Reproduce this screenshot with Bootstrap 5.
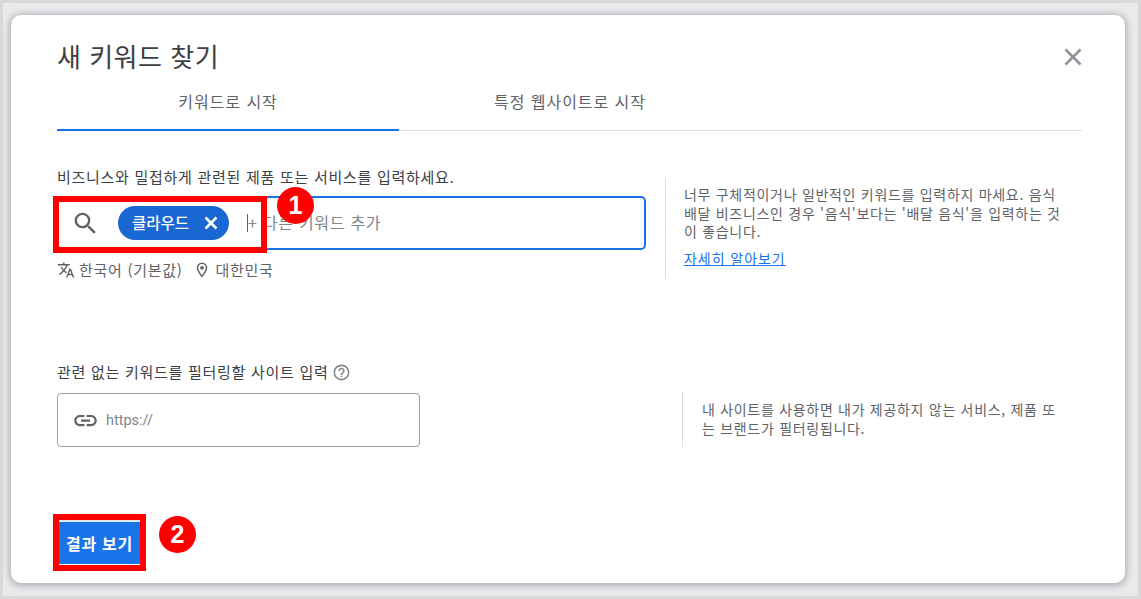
<!DOCTYPE html>
<html lang="ko">
<head>
<meta charset="utf-8">
<title>새 키워드 찾기</title>
<link rel="stylesheet" href="https://cdn.jsdelivr.net/npm/bootstrap@5.3.0/dist/css/bootstrap.min.css">
<style>
html,body{height:100%;}
body{margin:0;background:#e9eaec;font-family:"Noto Sans CJK KR","Noto Sans",sans-serif;overflow:hidden;}
.stage{width:1141px;height:599px;border:3px solid #d9d9d9;padding:12px 13px 13px 8px;position:relative;}
.sheet{height:568px;width:1114px;border:0;border-radius:10px;background:#fff;box-shadow:0 1px 6px 2px rgba(60,64,67,.32);padding:22px 43px 0 46px;color:#3c4043;}
.heading{font-size:26px;line-height:38px;font-weight:400;color:#3c4043;margin:0;letter-spacing:.5px;}
.closer{width:20px;height:20px;margin-top:5px;margin-right:-1px;background:none;border:0;padding:0;}
.tabbar{border-bottom:1px solid #dadce0;margin-top:13px;height:43px;}
.tabitem{width:342px;font-size:16px;line-height:24px;text-align:center;color:#5f6368;padding-top:1px;height:43px;letter-spacing:.95px;}
.tabitem.sel{border-bottom:2px solid #1a73e8;}
.fieldlabel{font-size:15px;line-height:20px;color:#3c4043;letter-spacing:.72px;}
.firstrow{margin-top:36px;}
.leftcol{width:589px;}
.kwbox{height:54px;border:2px solid #1a73e8;border-radius:5px;margin-top:9px;padding-left:12px;}
.chip{background:#1967d2;color:#fff;border-radius:17px;height:34px;width:111px;font-size:15.5px;font-weight:500;padding:0 11px 0 14px;margin-left:18px;}
.caretbar{width:1px;height:18px;background:#5f6368;margin-left:18px;}
.ph{font-size:16px;color:#80868b;letter-spacing:.72px;margin-top:-2px;}
.locale{font-size:15px;line-height:20px;color:#5f6368;margin-top:10px;letter-spacing:.7px;}
.hint{border-left:1px solid #dadce0;font-size:14px;line-height:18.5px;color:#5f6368;letter-spacing:.7px;}
.hint1{margin-left:19px;margin-top:11px;padding:7px 0 0 18px;width:397px;height:101px;}
.hint a{color:#1a73e8;display:block;margin-top:8px;letter-spacing:.95px;}
.secondrow{margin-top:82px;}
.sitecol{width:625px;}
.sitebox{width:363px;height:54px;border:1px solid #9aa0a6;border-radius:4px;margin-top:11px;padding-left:14px;padding-top:1px;font-family:Roboto,"Noto Sans",sans-serif;font-size:14.5px;color:#80868b;gap:7px;}
.hint2{margin-top:30px;padding:8px 0 0 19px;width:375px;height:55px;}
.resultbtn{margin-top:72px;width:81px;height:45px;margin-left:2px;border:0;border-radius:0;background:#1a73e8;color:#fff;font-size:16px;font-weight:700;padding:0;border-top:3px solid #dfe8f5;letter-spacing:.7px;}
.locgap{margin-left:11px;}
.redbox{position:absolute;border:6px solid #f00;pointer-events:none;}
.redbox.one{left:53px;top:196px;width:214px;height:57px;}
.redbox.two{left:53px;top:514px;width:93px;height:57px;}
.dot{position:absolute;width:37px;height:37px;border-radius:50%;background:#f00;color:#fff;font-family:"Liberation Sans",sans-serif;font-weight:700;font-size:25px;}
.dot.one{left:277px;top:187px;}
.dot.two{left:159px;top:516px;}
.stage-abs{position:absolute;left:-3px;top:-3px;width:1141px;height:599px;pointer-events:none;}
</style>
</head>
<body>
<div class="stage">
  <div class="card sheet">
    <div class="d-flex justify-content-between align-items-start">
      <h1 class="heading">새 키워드 찾기</h1>
      <button class="closer" aria-label="닫기">
        <svg width="20" height="20" viewBox="0 0 20 20"><path d="M2.500 2.500 17.500 17.500M17.500 2.500 2.500 17.500" stroke="#8d939a" stroke-width="2.600" fill="none"/></svg>
      </button>
    </div>
    <div class="d-flex tabbar">
      <div class="tabitem sel">키워드로 시작</div>
      <div class="tabitem">특정 웹사이트로 시작</div>
    </div>

    <div class="d-flex firstrow">
      <div class="leftcol">
        <div class="fieldlabel">비즈니스와 밀접하게 관련된 제품 또는 서비스를 입력하세요.</div>
        <div class="d-flex align-items-center kwbox">
          <svg width="29" height="29" viewBox="0 0 24 24" fill="#5f6368"><path d="M15.500 14h-.79l-.28-.27A6.470 6.470 0 0 0 16 9.500 6.500 6.500 0 1 0 9.500 16c1.610 0 3.090-.59 4.230-1.570l.27.28v.79l5 4.990L20.490 19l-4.990-5zm-6 0C7.010 14 5 11.990 5 9.500S7.010 5 9.500 5 14 7.010 14 9.500 11.990 14 9.500 14z"/></svg>
          <div class="d-flex align-items-center justify-content-between chip">
            <span>클라우드</span>
            <svg width="14" height="14" viewBox="0 0 14 14"><path d="M1.500 1.500 12.500 12.500M12.500 1.500 1.500 12.500" stroke="#fff" stroke-width="2.600" fill="none"/></svg>
          </div>
          <span class="caretbar"></span>
          <span class="ph">+ 다른 키워드 추가</span>
        </div>
        <div class="d-flex align-items-center locale">
          <svg width="18" height="18" viewBox="0 0 24 24" fill="#5f6368"><path d="M12.870 15.070l-2.540-2.510.03-.03A17.520 17.520 0 0 0 14.070 6H17V4h-7V2H8v2H1v2h11.170C11.500 7.920 10.440 9.750 9 11.350 8.070 10.320 7.300 9.190 6.690 8h-2c.73 1.630 1.730 3.170 2.980 4.560l-5.090 5.020L4 19l5-5 3.110 3.110.76-2.040zM18.500 10h-2L12 22h2l1.120-3h4.750L21 22h2l-4.500-12zm-2.620 7l1.620-4.330L19.120 17h-3.240z"/></svg>
          <span class="ms-1">한국어 (기본값)</span>
          <svg class="locgap" width="18" height="18" viewBox="0 0 24 24" fill="#5f6368"><path d="M12 2a7 7 0 0 0-7 7c0 5.250 7 13 7 13s7-7.750 7-13a7 7 0 0 0-7-7zm0 2a5 5 0 0 1 5 5c0 2.880-2.880 7.190-5 9.880C9.920 16.210 7 11.850 7 9a5 5 0 0 1 5-5zm0 2.500A2.500 2.500 0 1 0 12 11.500 2.500 2.500 0 0 0 12 6.500z"/></svg>
          <span class="ms-1">대한민국</span>
        </div>
      </div>
      <div class="hint hint1">
        너무 구체적이거나 일반적인 키워드를 입력하지 마세요. 음식 배달 비즈니스인 경우 '음식'보다는 '배달 음식'을 입력하는 것이 좋습니다.
        <a href="#">자세히 알아보기</a>
      </div>
    </div>

    <div class="d-flex secondrow">
      <div class="sitecol">
        <div class="d-flex align-items-center fieldlabel">
          <span>관련 없는 키워드를 필터링할 사이트 입력</span>
          <svg class="ms-1" width="19" height="19" viewBox="0 0 24 24" fill="#80868b"><path d="M11 18h2v-2h-2v2zm1-16C6.480 2 2 6.480 2 12s4.480 10 10 10 10-4.480 10-10S17.520 2 12 2zm0 18c-4.410 0-8-3.590-8-8s3.590-8 8-8 8 3.590 8 8-3.590 8-8 8zm0-14c-2.210 0-4 1.790-4 4h2c0-1.100.9-2 2-2s2 .9 2 2c0 2-3 1.750-3 5h2c0-2.250 3-2.500 3-5 0-2.210-1.790-4-4-4z"/></svg>
        </div>
        <div class="d-flex align-items-center sitebox">
          <svg width="27" height="27" viewBox="0 0 24 24" fill="#5f6368"><path d="M3.900 12c0-1.710 1.390-3.100 3.100-3.100h4V7H7c-2.760 0-5 2.240-5 5s2.240 5 5 5h4v-1.900H7c-1.710 0-3.100-1.390-3.100-3.100zM8 13h8v-2H8v2zm9-6h-4v1.900h4c1.710 0 3.100 1.390 3.100 3.100s-1.390 3.100-3.100 3.100h-4V17h4c2.760 0 5-2.240 5-5s-2.240-5-5-5z"/></svg>
          <span>https://</span>
        </div>
      </div>
      <div class="hint hint2">내 사이트를 사용하면 내가 제공하지 않는 서비스, 제품 또는 브랜드가 필터링됩니다.</div>
    </div>

    <div><button class="btn resultbtn">결과 보기</button></div>
  </div>
  <div class="stage-abs">
    <div class="redbox one"></div>
    <div class="redbox two"></div>
    <div class="dot one d-flex align-items-center justify-content-center">1</div>
    <div class="dot two d-flex align-items-center justify-content-center">2</div>
  </div>
</div>
<script src="https://cdn.jsdelivr.net/npm/bootstrap@5.3.0/dist/js/bootstrap.bundle.min.js"></script>
</body>
</html>
